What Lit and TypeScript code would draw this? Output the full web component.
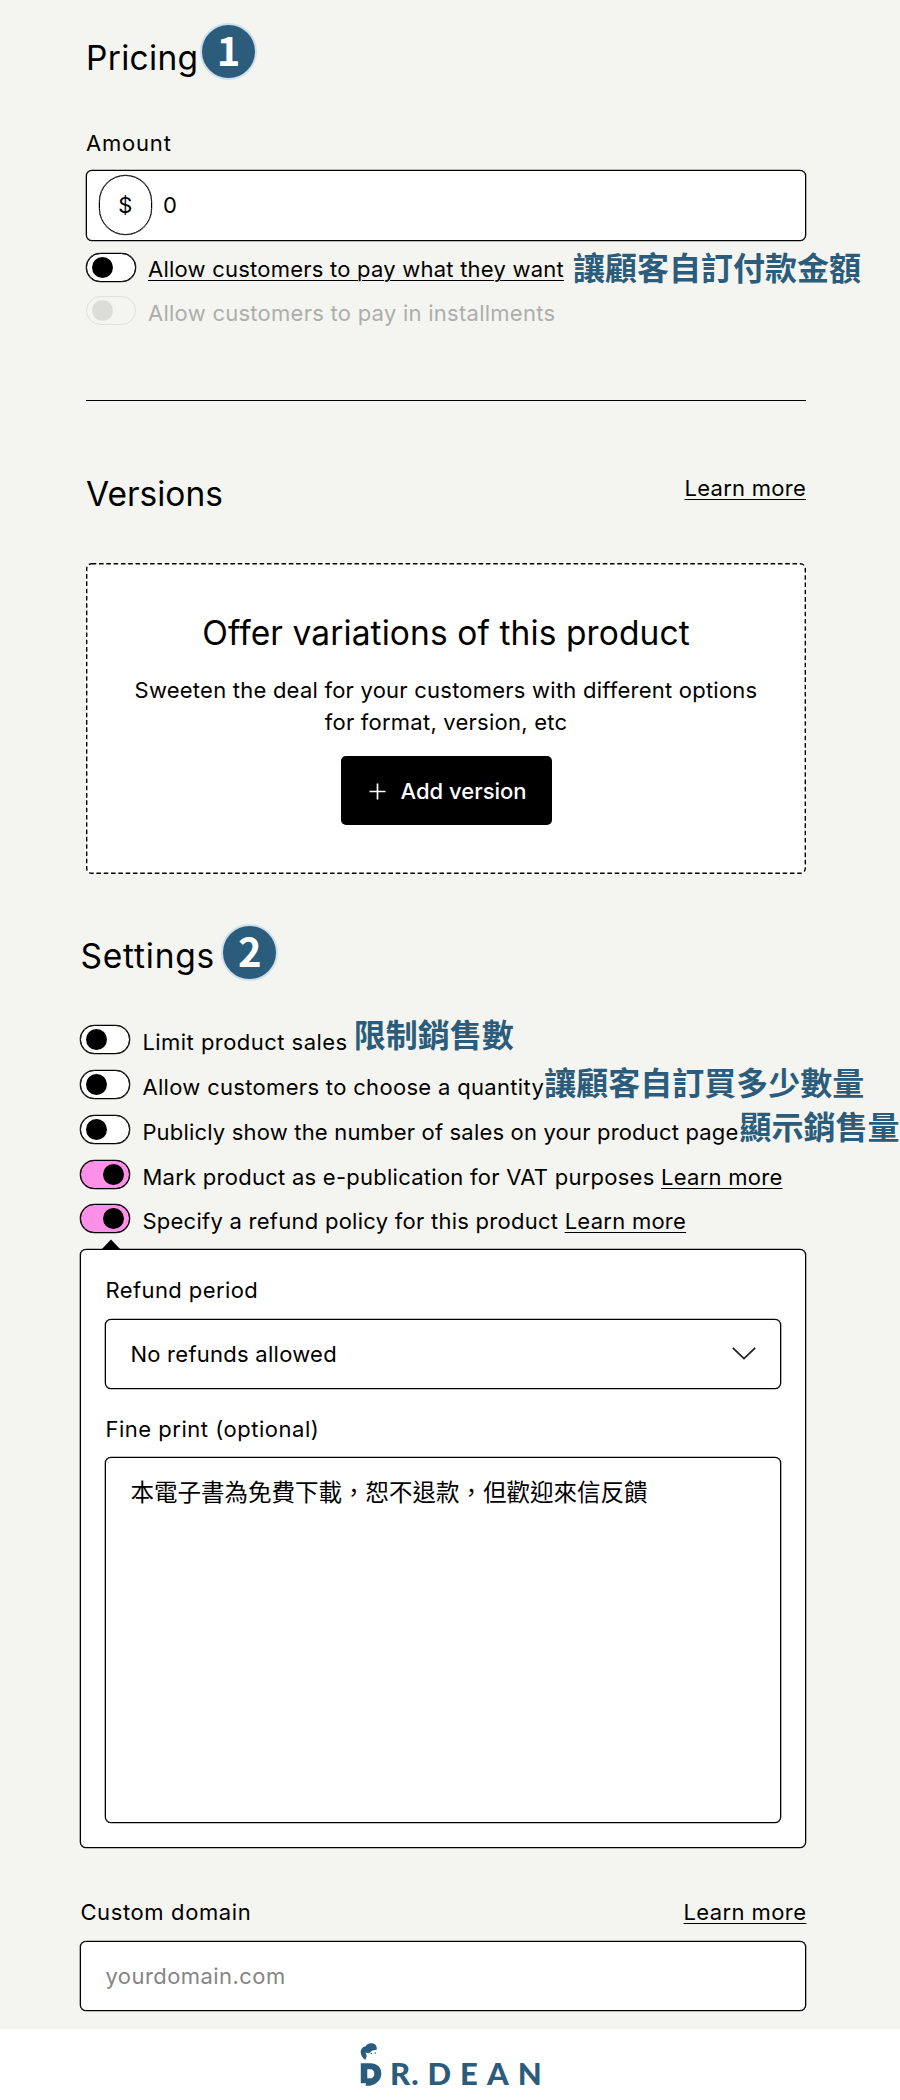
import { LitElement, html, css, nothing } from "lit";
import { customElement, property } from "lit/decorators.js";

@customElement("ui-toggle")
class UiToggle extends LitElement {
  @property({ type: Boolean, reflect: true }) on = false;
  @property({ type: Boolean, reflect: true }) disabled = false;

  static styles = css`
    :host {
      display: flex;
      box-sizing: border-box;
      flex: none;
      width: 50px;
      height: 29px;
      padding: 0 5px;
      align-items: center;
      border: 1px solid #000;
      border-radius: 15px;
      background: #fff;
      box-shadow: 0 0 0 0.3px #000;
    }
    :host([on]) {
      justify-content: flex-end;
      background: #ff90e8;
    }
    :host([disabled]) {
      background: transparent;
      border-color: #dfe0dc;
      box-shadow: none;
    }
    .knob {
      width: 21px;
      height: 21px;
      border-radius: 50%;
      background: #000;
    }
    :host([disabled]) .knob {
      background: #dcddd9;
    }
  `;

  render() {
    return html`<span class="knob"></span>`;
  }
}

@customElement("app-root")
class AppRoot extends LitElement {
  static styles = css`
    :host {
      display: block;
      width: 900px;
      height: 2100px;
      overflow: hidden;
      background: #f4f5f0;
      color: #000;
      font: 400 22px/30px Inter, "Noto Sans CJK TC", sans-serif;
      letter-spacing: 0.26px;
      white-space: nowrap;
    }
    * {
      box-sizing: border-box;
    }
    h2,
    h3,
    p {
      margin: 0;
      font-weight: 400;
    }
    h2,
    h3 {
      font-size: 33.5px;
      line-height: 40px;
      letter-spacing: 0;
    }
    h3 { letter-spacing: 0.1px; }
    a {
      color: inherit;
      text-decoration: underline;
      text-decoration-thickness: 1.3px;
      text-underline-offset: 3px;
    }
    .column {
      display: flex;
      flex-direction: column;
      width: 720px;
      margin-left: 86px;
    }
    .column.wide {
      width: 726px;
      margin-left: 80.4px;
    }
    .pricing { padding-top: 23px; }
    .head {
      display: flex;
      height: 57px;
      align-items: flex-start;
    }
    .badge {
      display: flex;
      width: 57px;
      height: 57px;
      flex: none;
      align-items: center;
      justify-content: center;
      padding-bottom: 5px;
      border: 2px solid #cfe0ea;
      border-radius: 50%;
      background: #2b5c7c;
      color: #fff;
      font: 700 40px/48px "Noto Sans CJK TC", sans-serif;
      letter-spacing: 0;
    }
    .pricing .head h2 {
      width: 114px;
      margin-top: 15px;
      letter-spacing: 0.3px;
    }
    .settings .head h2 {
      width: 141px;
      margin-top: 12px;
      letter-spacing: 0.8px;
    }
    .label-amount {
      margin-top: 48px;
      letter-spacing: 0.8px;
    }
    .field {
      display: flex;
      align-items: center;
      border: 1px solid #000;
      border-radius: 6px;
      background: #fff;
      box-shadow: 0 0 0 0.3px #000;
    }
    .amount {
      height: 71px;
      margin-top: 12px;
      padding: 0 0 2px 12px;
      gap: 11px;
    }
    .currency {
      display: flex;
      width: 53px;
      height: 60px;
      align-items: center;
      justify-content: center;
      border: 1px solid #000;
      border-radius: 27px;
      box-shadow: 0 0 0 0.2px #000;
    }
    .row {
      display: flex;
      height: 29px;
      gap: 12px;
    }
    .row .text { margin-top: 2px; }
    .row.first { margin-top: 12px; }
    .row.first .text {
      margin-top: 1px;
      letter-spacing: 0.23px;
    }
    .row.first .note { margin: -3px 0 0 -3px; }
    .row.second { margin-top: 14px; }
    .limit .text { letter-spacing: 0.46px; }
    .limit .note { margin: -8px 0 0 -6px; }
    .quantity .text { letter-spacing: 0.32px; }
    .quantity .note { margin: -5px 0 0 -12px; }
    .sales .text { letter-spacing: 0.18px; }
    .sales .note { margin: -6px 0 0 -11px; }
    .muted { color: #adaeab; }
    .note {
      color: #2b5c7c;
      font: 700 32px/32px "Noto Sans CJK TC", sans-serif;
      letter-spacing: 0;
    }
    .rule {
      height: 1px;
      margin-top: 75px;
      background: #000;
    }
    .split {
      display: flex;
      justify-content: space-between;
    }
    .versions {
      height: 40px;
      margin-top: 72px;
    }
    .versions h2 { margin-top: 1px; }
    .empty {
      display: flex;
      position: relative;
      flex-direction: column;
      align-items: center;
      height: 311px;
      margin-top: 50px;
      padding-top: 50px;
      border-radius: 5px;
      background: #fff;
      text-align: center;
    }
    .dashes {
      position: absolute;
      top: 0;
      left: 0;
      width: 720px;
      height: 311px;
    }
    .empty p {
      margin-top: 21px;
      line-height: 32px;
      letter-spacing: 0.23px;
    }
    .add {
      display: flex;
      width: 211px;
      height: 69px;
      margin-top: 18px;
      padding: 1px 0 0 28px;
      align-items: center;
      gap: 15px;
      border-radius: 5px;
      background: #000;
      color: #fff;
      font-weight: 500;
      letter-spacing: 0;
    }
    .settings { margin-top: 50px; }
    .list {
      display: flex;
      flex-direction: column;
      margin-top: 44.3px;
      gap: 15.75px;
    }
    .panel {
      display: flex;
      position: relative;
      flex-direction: column;
      height: 599px;
      margin-top: 15.7px;
      padding: 25px 24px 24px;
      border: 1px solid #000;
      border-radius: 6px;
      background: #fff;
      box-shadow: 0 0 0 0.3px #000;
    }
    .caret {
      position: absolute;
      top: -11px;
      left: 20px;
      width: 20px;
      height: 11px;
    }
    .period { letter-spacing: 0.42px; }
    .select {
      justify-content: space-between;
      height: 70px;
      margin-top: 14px;
      padding: 0 24px;
    }
    .fine {
      margin-top: 25px;
      letter-spacing: 0.52px;
    }
    .area {
      flex: 1;
      margin-top: 13px;
      padding: 19px 24px;
      align-items: flex-start;
      font-size: 23.5px;
      line-height: 32px;
      letter-spacing: 0;
    }
    .domain { margin-top: 49px; }
    .domain span { letter-spacing: 0.62px; }
    .domain a { letter-spacing: 0.4px; }
    .domain-field {
      height: 70px;
      margin-top: 14px;
      padding-left: 24px;
      color: #858585;
      letter-spacing: 0.45px;
    }
    .footer {
      display: flex;
      height: 71px;
      margin-top: 18px;
      padding: 13px 0 0 360px;
      align-items: flex-start;
      background: #fff;
      color: #2b5c7c;
    }
    .brand {
      margin: 11px 0 0 8px;
      font: 900 31px/40px Lato, sans-serif;
      letter-spacing: 9px;
    }
    .tight { letter-spacing: 1px; }
  `;

  private row(kind: string, on: boolean, text: unknown, note?: string) {
    return html`<div class="row ${kind}">
      <ui-toggle ?on=${on}></ui-toggle><span class="text">${text}</span>
      ${note ? html`<span class="note">${note}</span>` : nothing}
    </div>`;
  }

  render() {
    return html`
      <section class="column pricing">
        <div class="head"><h2>Pricing</h2><span class="badge">1</span></div>
        <span class="label-amount">Amount</span>
        <div class="field amount"><span class="currency">$</span><span>0</span></div>
        <div class="row first">
          <ui-toggle></ui-toggle>
          <span class="text"><a>Allow customers to pay what they want</a></span>
          <span class="note">讓顧客自訂付款金額</span>
        </div>
        <div class="row second muted">
          <ui-toggle disabled></ui-toggle>
          <span class="text">Allow customers to pay in installments</span>
        </div>
        <div class="rule"></div>
        <div class="split versions"><h2>Versions</h2><a>Learn more</a></div>
        <div class="empty">
          <svg class="dashes" viewBox="0 0 720 311" fill="none" stroke="#000" stroke-width="1.4" stroke-dasharray="4.6 2.7">
            <rect x="0.7" y="0.7" width="718.6" height="309.6" rx="5" />
          </svg>
          <h3>Offer variations of this product</h3>
          <p>Sweeten the deal for your customers with different options<br />for format, version, etc</p>
          <span class="add">
            <svg width="17" height="17" viewBox="0 0 17 17" stroke="#fff" stroke-width="1.7"><path d="M8.5 0.5v16M0.5 8.5h16" /></svg>
            <span>Add version</span>
          </span>
        </div>
      </section>
      <section class="column wide settings">
        <div class="head"><h2>Settings</h2><span class="badge">2</span></div>
        <div class="list">
          ${this.row("limit", false, "Limit product sales", "限制銷售數")}
          ${this.row("quantity", false, "Allow customers to choose a quantity", "讓顧客自訂買多少數量")}
          ${this.row("sales", false, "Publicly show the number of sales on your product page", "顯示銷售量")}
          ${this.row("vat", true, html`Mark product as e-publication for VAT purposes <a>Learn more</a>`)}
          ${this.row("refund", true, html`Specify a refund policy for this product <a>Learn more</a>`)}
        </div>
        <div class="panel">
          <svg class="caret" viewBox="0 0 20 11"><path d="M0 11L10 0.5L20 11z" /></svg>
          <span class="period">Refund period</span>
          <div class="field select">
            <span>No refunds allowed</span>
            <svg width="24" height="13" viewBox="0 0 24 13" fill="none" stroke="#222" stroke-width="1.8"><path d="M0.8 0.8L12 11.6L23.2 0.8" /></svg>
          </div>
          <span class="fine">Fine print (optional)</span>
          <div class="field area">本電子書為免費下載，恕不退款，但歡迎來信反饋</div>
        </div>
        <div class="split domain"><span>Custom domain</span><a>Learn more</a></div>
        <div class="field domain-field">yourdomain.com</div>
      </section>
      <footer class="footer">
        <svg width="22" height="48" viewBox="0 0 22 48" fill="#2b5c7c">
          <path fill-rule="evenodd" d="M0.8 21.300H10.500C17 21.300 21.300 25.500 21.300 31.500C21.300 38 16.500 42.500 10 43.700H5.500L6 41.300H0.800zM7.300 27.300V36.300H11.500Q14.300 35 14.300 31.800Q14.300 28.500 11.500 27.300z" />
          <path d="M0.7 10C0.7 6.500 3.500 4.500 5.500 4.500C7 1.500 10.500 0.800 13 1.500C16 2 17.300 5 16.700 7.700L12.500 8.500L9 11.200L5.500 10.500L6.700 14L5.300 18C2.500 16 0.700 13 0.700 10z" />
          <circle cx="11.300" cy="11.500" r="0.800" />
          <circle cx="15.200" cy="11" r="0.800" />
        </svg>
        <span class="brand"><span class="tight">R</span>.DEAN</span>
      </footer>
    `;
  }
}
